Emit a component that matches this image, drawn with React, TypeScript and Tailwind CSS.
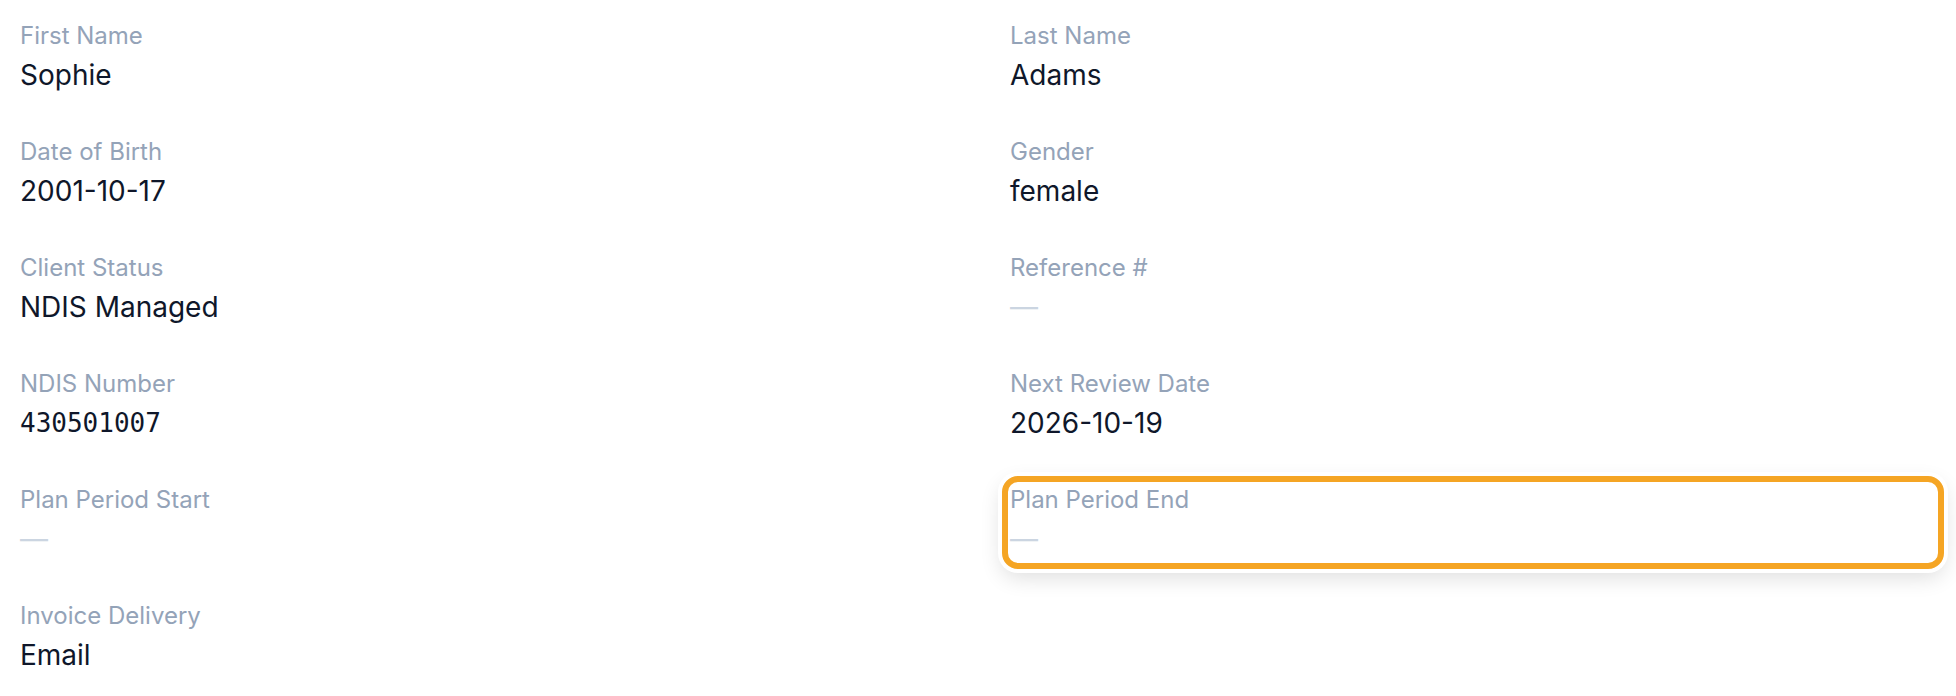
import React from "react";

type Field = { label: string; value?: string; mono?: boolean; highlight?: boolean };

const fields: Field[] = [
  { label: "First Name", value: "Sophie" },
  { label: "Last Name", value: "Adams" },
  { label: "Date of Birth", value: "2001-10-17" },
  { label: "Gender", value: "female" },
  { label: "Client Status", value: "NDIS Managed" },
  { label: "Reference #" },
  { label: "NDIS Number", value: "430501007", mono: true },
  { label: "Next Review Date", value: "2026-10-19" },
  { label: "Plan Period Start" },
  { label: "Plan Period End", highlight: true },
  { label: "Invoice Delivery", value: "Email" },
];

function FieldView({ f }: { f: Field }) {
  return (
    <div className="relative flex flex-col">
      {f.highlight && (
        <div className="pointer-events-none absolute -inset-[8px] rounded-[16px] border-[6px] border-[#f5a524] shadow-[0_0_0_4px_#ffffff,0_8px_22px_rgba(0,0,0,0.14)]" />
      )}
      <div className="text-[24px] leading-[31px] text-[#94a3b8]">{f.label}</div>
      {f.value ? (
        f.mono ? (
          <div className="mt-[2px] text-[26px] leading-[44px] text-[#0f172a] [font-family:'DejaVu_Sans_Mono','Liberation_Mono',monospace]">
            {f.value}
          </div>
        ) : (
          <div className="mt-[2px] text-[28px] leading-[44px] text-[#0f172a]">{f.value}</div>
        )
      ) : (
        <div className="mt-[2px] text-[28px] leading-[44px] text-[#cbd5e1]">—</div>
      )}
    </div>
  );
}

export default function App() {
  return (
    <div className="min-h-[696px] w-full bg-white px-5 pt-5 [font-family:Inter,'Noto_Sans',sans-serif]">
      <div className="grid grid-cols-2 gap-x-16 gap-y-[39px]">
        {fields.map((f) => (
          <FieldView key={f.label} f={f} />
        ))}
      </div>
    </div>
  );
}
